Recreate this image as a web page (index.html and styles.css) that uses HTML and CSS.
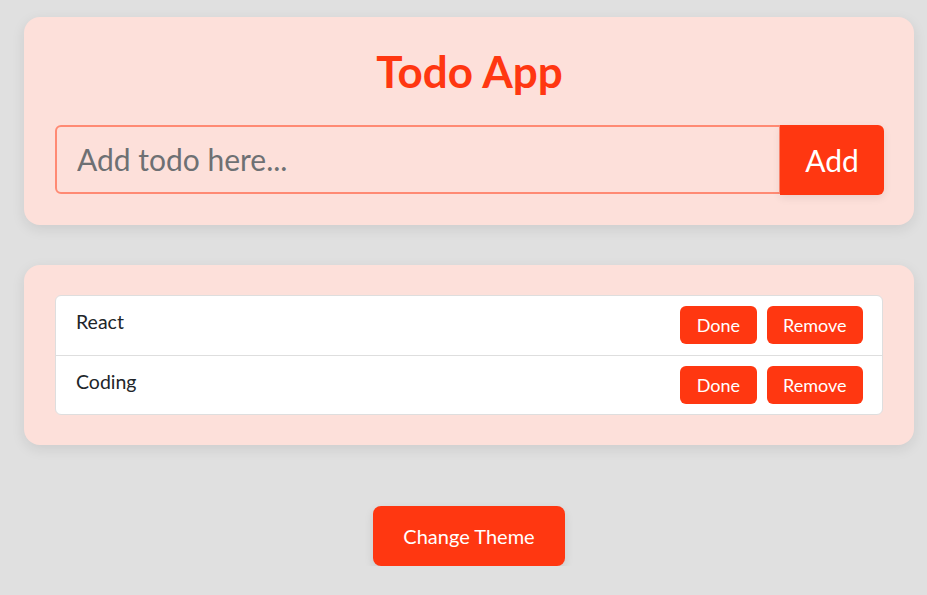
FILE: index.html
```html
<!DOCTYPE html>
<html lang="en">
<head>
<meta charset="utf-8">
<title>Todo App</title>
<link rel="stylesheet" href="styles.css">
</head>
<body>
  <div class="app">
    <section class="card card-form">
      <h1 class="title">Todo App</h1>
      <form class="input-group" onsubmit="return false;">
        <input class="todo-input" type="text" placeholder="Add todo here...">
        <button class="btn btn-add" type="submit">Add</button>
      </form>
    </section>
    <section class="card card-list">
      <ul class="list">
        <li class="item">
          <span class="item-text">React</span>
          <div class="item-actions">
            <button class="btn btn-sm">Done</button>
            <button class="btn btn-sm">Remove</button>
          </div>
        </li>
        <li class="item">
          <span class="item-text">Coding</span>
          <div class="item-actions">
            <button class="btn btn-sm">Done</button>
            <button class="btn btn-sm">Remove</button>
          </div>
        </li>
      </ul>
    </section>
    <div class="theme-row">
      <button class="btn btn-theme">Change Theme</button>
    </div>
  </div>
</body>
</html>
```

FILE: styles.css
```css
* { box-sizing: border-box; }

html, body {
  margin: 0;
  padding: 0;
  background: #e0e0e0;
  font-family: Lato, "Open Sans", sans-serif;
  color: #212529;
}

.app {
  width: 890px;
  margin-left: 24px;
  padding-top: 17px;
}

.card {
  background: #fde0da;
  border-radius: 16px;
  box-shadow: 0 4px 14px rgba(0, 0, 0, 0.09);
}

.card-form {
  padding: 28px 30px 30px 31px;
}

.title {
  margin: 0 0 27px;
  text-align: center;
  font-size: 44px;
  font-weight: 700;
  line-height: 1.2;
  color: #ff3711;
}

.input-group {
  display: flex;
  margin: 0;
}

.todo-input {
  flex: 1;
  height: 69px;
  padding: 0 20px;
  border: 2px solid #ff8a73;
  border-right-width: 1px;
  border-radius: 6px 0 0 6px;
  background: #fde0da;
  font-family: inherit;
  font-size: 30px;
  color: #212529;
  outline: none;
}

.todo-input::placeholder {
  color: #6e7073;
}

.btn {
  border: none;
  background: #ff3711;
  color: #fff;
  font-family: inherit;
  cursor: pointer;
}

.btn-add {
  width: 104px;
  height: 70px;
  font-size: 30px;
  border-radius: 0 6px 6px 0;
  box-shadow: 0 3px 8px rgba(0, 0, 0, 0.08);
}

.card-list {
  margin-top: 40px;
  padding: 30px 31px 30px 31px;
}

.list {
  list-style: none;
  margin: 0;
  padding: 0;
  background: #fff;
  border: 1px solid #dedede;
  border-radius: 6px;
}

.item {
  display: flex;
  justify-content: space-between;
  align-items: flex-start;
  height: 59px;
  padding: 10px 19px 0 20px;
}

.item + .item {
  border-top: 1px solid #dedede;
}

.item-text {
  margin-top: 4px;
  font-size: 19.5px;
  line-height: 1.2;
}

.item-actions {
  display: flex;
  gap: 10px;
}

.btn-sm {
  height: 38px;
  padding: 0 16.5px;
  font-size: 18px;
  border-radius: 6px;
}

.theme-row {
  display: flex;
  justify-content: center;
  margin-top: 61px;
}

.btn-theme {
  height: 60px;
  padding: 0 30px;
  font-size: 20px;
  border-radius: 8px;
  box-shadow: 0 4px 10px rgba(0, 0, 0, 0.1);
}
```
